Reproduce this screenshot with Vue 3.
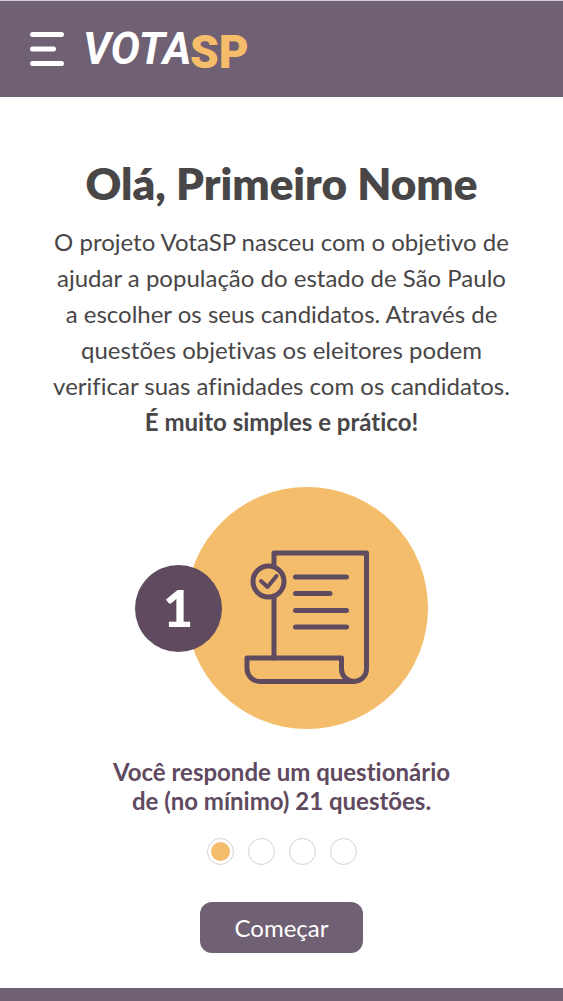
<script setup>
import { ref } from 'vue'

const steps = [1, 2, 3, 4]
const current = ref(1)
</script>

<template>
  <div class="page">
    <header class="topbar">
      <button class="menu" type="button" aria-label="Menu">
        <svg width="34" height="36" viewBox="0 0 34 36" fill="none" stroke="#fff" stroke-width="5" stroke-linecap="round">
          <path d="M2.5 3.5H31.5M2.5 18H23.5M2.5 32.5H31.5" />
        </svg>
      </button>
      <a class="brand" href="#" aria-label="VotaSP">
        <svg width="176" height="64" viewBox="0 0 176 64">
          <text class="brush" x="-1" y="47">VOTA</text>
          <text class="block" x="106" y="51">SP</text>
        </svg>
      </a>
    </header>

    <main class="content">
      <h1>Olá, Primeiro Nome</h1>
      <p class="intro">
        O projeto VotaSP nasceu com o objetivo de<br />
        ajudar a população do estado de São Paulo<br />
        a escolher os seus candidatos. Através de<br />
        questões objetivas os eleitores podem<br />
        verificar suas afinidades com os candidatos.<br />
        <strong>É muito simples e prático!</strong>
      </p>

      <svg class="art" width="293" height="242" viewBox="0 0 293 242" role="img" aria-label="Passo 1">
        <circle cx="172" cy="121" r="121" fill="#f3bd6b" />
        <circle cx="43.500" cy="121.500" r="43.500" fill="#5f4a60" />
        <text class="number" x="43" y="140" text-anchor="middle">1</text>
        <g fill="none" stroke="#5f4a60" stroke-width="5" stroke-linecap="round" stroke-linejoin="round">
          <path d="M139 77V66H231.500V182A12.500 12.500 0 0 1 219 194.500H125A13 13 0 0 1 112 181.500V171H206.500V182A12.500 12.500 0 0 0 219 194.500" />
          <path d="M139 111V171" />
          <circle cx="133.500" cy="94.500" r="15.500" />
          <path stroke-width="4" d="M126 94L132.500 100L141.500 89" />
          <path d="M160.500 90H211.500M160.500 106.500H195M160.500 123.500H211.500M160.500 140H211.500" />
        </g>
      </svg>

      <p class="caption">
        Você responde um questionário<br />
        de (no mínimo) 21 questões.
      </p>

      <div class="dots" role="radiogroup" aria-label="Passos">
        <input
          v-for="step in steps"
          :key="step"
          v-model="current"
          type="radio"
          name="step"
          :value="step"
          :aria-label="`Passo ${step}`"
        />
      </div>

      <button class="start" type="button">Começar</button>
    </main>

    <footer class="bottom"></footer>
  </div>
</template>

<style>
body {
  margin: 0;
  background: #fff;
}
</style>

<style scoped>
.page {
  display: flex;
  flex-direction: column;
  min-height: 100vh;
  font-family: Lato, "Noto Sans", sans-serif;
  font-variant-ligatures: none;
  color: #484647;
}
.topbar {
  display: flex;
  align-items: center;
  gap: 20px;
  box-sizing: border-box;
  height: 97px;
  padding: 0 30px;
  border-top: 1px solid #d5cfd6;
  background: #706073;
}
.menu {
  padding: 0;
  border: 0;
  background: none;
  cursor: pointer;
}
.menu svg,
.brand svg {
  display: block;
}
.brush {
  fill: #fff;
  font: italic 700 44px Roboto, sans-serif;
}
.block {
  fill: #f5bd6a;
  font: 900 46px Roboto, sans-serif;
}
.content {
  display: flex;
  flex: 1;
  flex-direction: column;
  align-items: center;
  padding: 58px 16px 35px;
  text-align: center;
}
h1 {
  margin: 0;
  font-size: 44px;
  line-height: 56px;
  font-weight: 800;
}
.intro {
  margin: 13px 0 47px;
  font-size: 24px;
  line-height: 36px;
}
.art {
  max-width: 100%;
}
.number {
  fill: #fff;
  font: 900 52px Lato, sans-serif;
}
.caption {
  margin: 28px 0 23px;
  color: #5f4a60;
  font-size: 24px;
  line-height: 29px;
  font-weight: 700;
}
.dots {
  display: flex;
  gap: 14px;
}
.dots input {
  box-sizing: border-box;
  width: 27px;
  height: 27px;
  margin: 0;
  border: 1px solid #d2d2d2;
  border-radius: 50%;
  appearance: none;
  background: #fff;
}
.dots input:checked {
  padding: 3px;
  background: #f3bd6b content-box;
}
.start {
  width: 163px;
  height: 51px;
  margin-top: 37px;
  border: 0;
  border-radius: 12px;
  background: #706073;
  color: #fff;
  font: 24px Lato, "Noto Sans", sans-serif;
}
.bottom {
  height: 13px;
  background: #706073;
}
</style>
